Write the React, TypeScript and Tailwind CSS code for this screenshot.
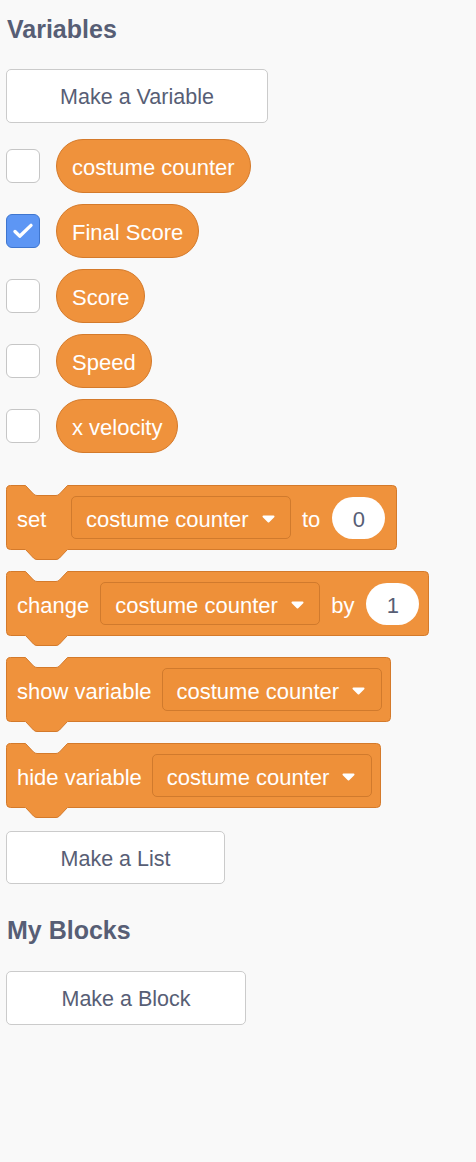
import React from "react";

const ORANGE = "#ef923c";
const ORANGE_DARK = "#d47a2b";

function blockPath(W: number, H: number) {
  const x0 = 0.5;
  const y0 = 0.5;
  const w = W - 1;
  const h = H - 1;
  const r = 4;
  return [
    `M ${x0},${y0 + r}`,
    `A ${r},${r} 0 0 1 ${x0 + r},${y0}`,
    `H ${x0 + 19}`,
    `L ${x0 + 27},${y0 + 8.5}`,
    `Q ${x0 + 28.5},${y0 + 10} ${x0 + 30.5},${y0 + 10}`,
    `H ${x0 + 49.5}`,
    `Q ${x0 + 51.5},${y0 + 10} ${x0 + 53},${y0 + 8.5}`,
    `L ${x0 + 61},${y0}`,
    `H ${x0 + w - r}`,
    `A ${r},${r} 0 0 1 ${x0 + w},${y0 + r}`,
    `V ${y0 + h - r}`,
    `A ${r},${r} 0 0 1 ${x0 + w - r},${y0 + h}`,
    `H ${x0 + 61}`,
    `L ${x0 + 53},${y0 + h + 8.5}`,
    `Q ${x0 + 51.5},${y0 + h + 10} ${x0 + 49.5},${y0 + h + 10}`,
    `H ${x0 + 30.5}`,
    `Q ${x0 + 28.5},${y0 + h + 10} ${x0 + 27},${y0 + h + 8.5}`,
    `L ${x0 + 19},${y0 + h}`,
    `H ${x0 + r}`,
    `A ${r},${r} 0 0 1 ${x0},${y0 + h - r}`,
    "Z",
  ].join(" ");
}

function Block({
  width,
  children,
}: {
  width: number;
  children: React.ReactNode;
}) {
  const H = 65;
  return (
    <div className="relative h-[65px]" style={{ width }}>
      <svg
        className="absolute left-0 top-0 overflow-visible"
        width={width}
        height={H + 11}
      >
        <path d={blockPath(width, H)} fill={ORANGE} stroke={ORANGE_DARK} strokeWidth={1} />
      </svg>
      <div className="relative flex h-full items-center pl-[11px] text-[22px] leading-none text-white">
        {children}
      </div>
    </div>
  );
}

function Label({ children, className = "" }: { children: React.ReactNode; className?: string }) {
  return <span className={`pt-[4px] ${className}`}>{children}</span>;
}

function Arrow() {
  return (
    <svg width="13" height="8" viewBox="0 0 13 8">
      <path
        d="M1.5,1.5 H11.5 L6.5,6.5 Z"
        fill="white"
        stroke="white"
        strokeWidth="2"
        strokeLinejoin="round"
      />
    </svg>
  );
}

function Dropdown() {
  return (
    <div className="flex h-[43px] w-[220px] items-center rounded-[5px] border border-[#d07a2d] bg-[#ee9039] pl-[14px]">
      <span className="pt-[4px]">costume counter</span>
      <span className="ml-[13px] flex items-center pt-[2px]">
        <Arrow />
      </span>
    </div>
  );
}

function NumberInput({ value }: { value: string }) {
  return (
    <div className="flex h-[42px] w-[53px] items-center justify-center rounded-full bg-white pt-[4px] text-[#575e75]">
      {value}
    </div>
  );
}

function Checkbox({ checked }: { checked?: boolean }) {
  if (checked) {
    return (
      <div className="flex h-[34px] w-[34px] shrink-0 items-center justify-center rounded-[6px] border border-[#3f76cf] bg-[#5d96f4]">
        <svg width="34" height="34" viewBox="0 0 34 34">
          <path
            d="M8.5,17.5 L13.5,22.5 L25.5,11"
            fill="none"
            stroke="white"
            strokeWidth="3.6"
            strokeLinecap="round"
            strokeLinejoin="round"
          />
        </svg>
      </div>
    );
  }
  return (
    <div className="h-[34px] w-[34px] shrink-0 rounded-[6px] border-[1.5px] border-[#c6c6c6] bg-white" />
  );
}

function VarRow({ name, checked }: { name: string; checked?: boolean }) {
  return (
    <div className="flex h-[54px] items-center gap-[16px]">
      <Checkbox checked={checked} />
      <div className="flex h-[54px] items-center rounded-full border border-[#d47a2b] bg-[#ef923c] px-[15px] pt-[4px] text-[22px] leading-none text-white">
        {name}
      </div>
    </div>
  );
}

function Button({
  label,
  width,
  height,
}: {
  label: string;
  width: string;
  height: string;
}) {
  return (
    <div
      className={`flex items-center justify-center rounded-[5px] border border-[#cbcbcb] bg-white pt-[4px] text-[21.5px] leading-none text-[#575e75] ${width} ${height}`}
    >
      {label}
    </div>
  );
}

export default function App() {
  return (
    <div className="h-[1162px] w-[476px] bg-[#f9f9f9] pl-[6px] font-['Liberation_Sans',Arial,Helvetica,sans-serif] text-[#575e75]">
      <div className="pl-[1px] pt-[15px] text-[25px] font-bold leading-[28px]">Variables</div>

      <div className="mt-[26px]">
        <Button label="Make a Variable" width="w-[262px]" height="h-[54px]" />
      </div>

      <div className="mt-[16px] flex flex-col gap-[11px]">
        <VarRow name="costume counter" />
        <VarRow name="Final Score" checked />
        <VarRow name="Score" />
        <VarRow name="Speed" />
        <VarRow name="x velocity" />
      </div>

      <div className="mt-[32px] flex flex-col gap-[21px]">
        <Block width={391}>
          <Label className="w-[54px]">set</Label>
          <Dropdown />
          <Label className="ml-[11px]">to</Label>
          <span className="ml-[12px]">
            <NumberInput value="0" />
          </span>
        </Block>
        <Block width={423}>
          <Label>change</Label>
          <span className="ml-[11px]">
            <Dropdown />
          </span>
          <Label className="ml-[11px]">by</Label>
          <span className="ml-[12px]">
            <NumberInput value="1" />
          </span>
        </Block>
        <Block width={385}>
          <Label>show variable</Label>
          <span className="ml-[10px]">
            <Dropdown />
          </span>
        </Block>
        <Block width={375}>
          <Label>hide variable</Label>
          <span className="ml-[10px]">
            <Dropdown />
          </span>
        </Block>
      </div>

      <div className="mt-[23px]">
        <Button label="Make a List" width="w-[219px]" height="h-[53px]" />
      </div>

      <div className="mt-[32px] pl-[1px] text-[25px] font-bold leading-[28px]">My Blocks</div>

      <div className="mt-[27px]">
        <Button label="Make a Block" width="w-[240px]" height="h-[54px]" />
      </div>
    </div>
  );
}
